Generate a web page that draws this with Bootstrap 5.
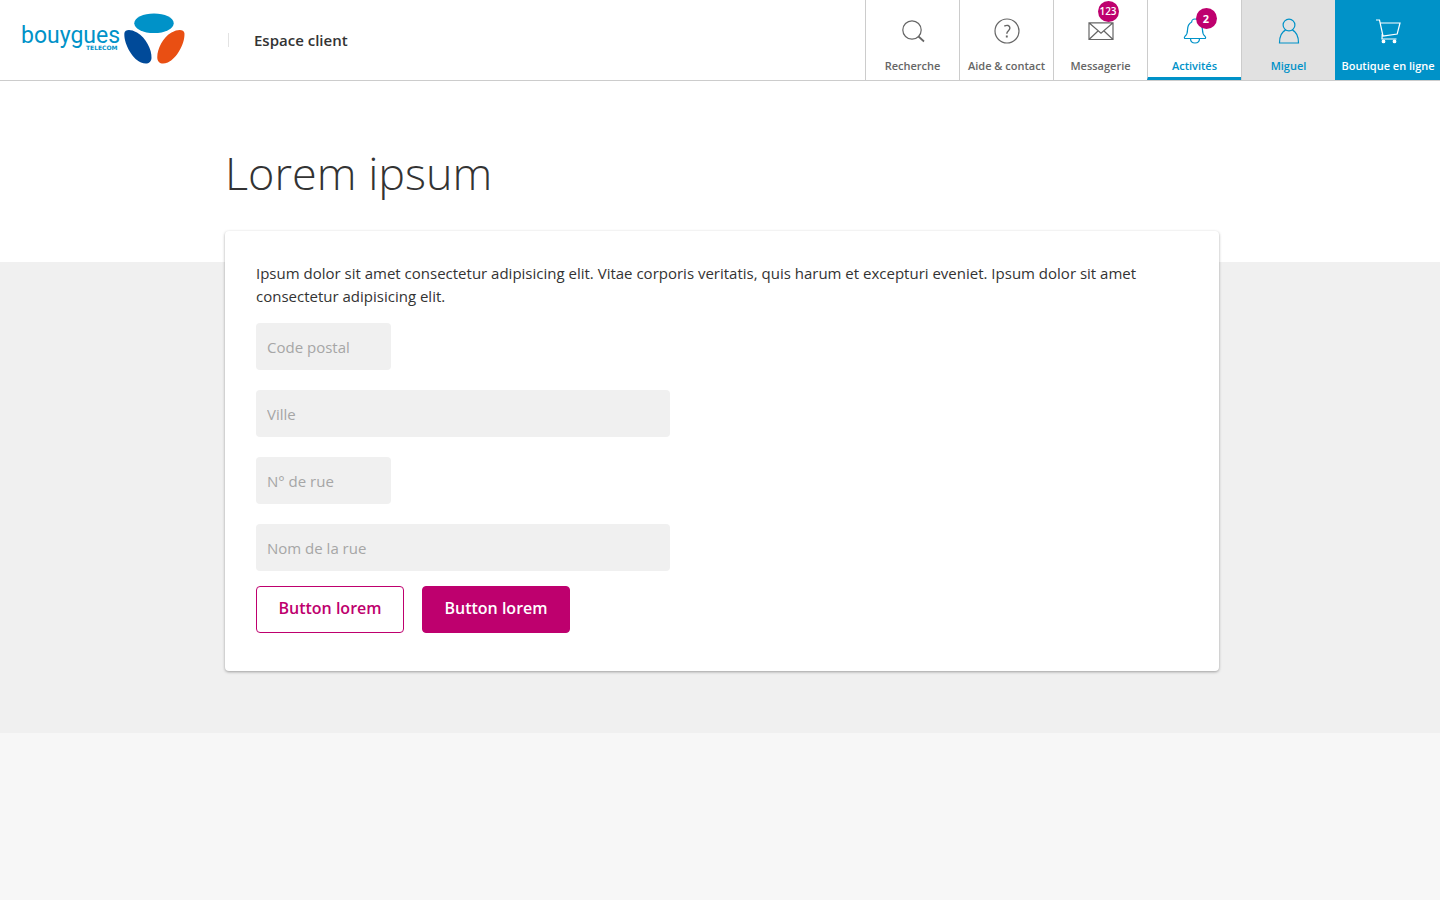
<!DOCTYPE html>
<html lang="fr">
<head>
<meta charset="utf-8">
<meta name="viewport" content="width=device-width, initial-scale=1">
<title>Espace client</title>
<link href="https://cdn.jsdelivr.net/npm/bootstrap@5.3.0/dist/css/bootstrap.min.css" rel="stylesheet">
<style>
  :root { --bt-blue: #0092c8; --bt-pink: #be006e; --bt-ink: #333; }
  body { font-family: "Open Sans", sans-serif; font-size: 15px; line-height: 23px; color: var(--bt-ink); background: #f7f7f7; }
  .site-header { min-height: 81px; border-bottom: 1px solid #ccc; }
  .brand-text { fill: var(--bt-blue); font-family: Roboto, sans-serif; font-size: 23px; }
  .brand-sub { fill: var(--bt-blue); font-family: "DejaVu Sans", sans-serif; font-size: 6px; font-weight: 700; }
  .space-name { margin-left: 43px; }
  .space-name::before { content: ""; width: 1px; height: 14px; margin-right: 25px; background: #e3e3e3; }
  .tool-link { min-width: 94px; padding-top: 17px; border-left: 1px solid #ccc; color: #666; font-size: 11px; line-height: 16px; font-weight: 600; text-decoration: none; white-space: nowrap; }
  .tool-link svg { fill: none; stroke: currentColor; stroke-width: 1.2; margin-bottom: 13px; }
  .tool-active { color: var(--bt-blue); border-bottom: 3px solid var(--bt-blue); }
  .tool-user { color: var(--bt-blue); background: #e1e1e1; }
  .tool-shop { min-width: 105px; color: #fff; background: var(--bt-blue); border-color: var(--bt-blue); }
  .icon-wrap { position: relative; }
  .count { position: absolute; width: 21px; height: 21px; border-radius: 50%; background: var(--bt-pink); color: #fff; font-size: 11px; line-height: 21px; text-align: center; }
  .count-bell { left: 15px; top: -9px; font-weight: 700; }
  .count-mail { left: 11px; top: -16px; font-size: 10px; }
  .page-width { max-width: 998px; padding-left: 4px; }
  .hero { padding-top: 61px; padding-bottom: 59px; }
  .page-title { font-size: 45px; line-height: 61px; font-weight: 300; }
  .form-area { display: flow-root; background: #f0f0f0; padding-bottom: 62px; }
  .panel { margin-top: -31px; padding: 31px 31px 38px; border-radius: 4px; background: #fff; box-shadow: 0 1px 3px rgba(0,0,0,.35); }
  .intro { margin-bottom: 15px; }
  .fields { gap: 20px; }
  .field { height: 47px; padding: 12px 11px; border: 0; border-radius: 4px; background: #f0f0f0; font-size: 15px; line-height: 23px; }
  .field::placeholder { color: #a6a6a6; }
  .field-short { max-width: 135px; }
  .field-long { max-width: 414px; }
  .actions { gap: 18px; margin-top: 15px; }
  .action { height: 47px; min-width: 148px; padding: 0 0 3px; border-radius: 4px; font-size: 16px; font-weight: 600;
    --bs-btn-color: var(--bt-pink); --bs-btn-bg: #fff; --bs-btn-border-color: var(--bt-pink); --bs-btn-hover-bg: #fbeaf4; --bs-btn-hover-color: var(--bt-pink); --bs-btn-hover-border-color: var(--bt-pink); }
  .action-main { --bs-btn-color: #fff; --bs-btn-bg: var(--bt-pink); --bs-btn-hover-bg: #9c005a; --bs-btn-hover-color: #fff; }
</style>
</head>
<body>
<header class="site-header bg-white d-flex flex-wrap justify-content-between">
  <div class="d-flex align-items-center">
    <a href="#" class="ms-3" aria-label="Bouygues Telecom">
      <svg class="d-block" width="169" height="60" viewBox="16 10 169 60">
        <text class="brand-text" x="21" y="43">bouygues</text>
        <text class="brand-sub" x="86" y="50">TELECOM</text>
        <ellipse cx="154" cy="23.3" rx="19.7" ry="9.8" fill="#0092c8"/>
        <path d="M124.4 33C125 29.500 130 28.500 137 32.500C146 37.500 152 50 151.500 58C151.200 63 147 65 141 62.500C131 58 123.500 42 124.400 33Z" fill="#004a99"/>
        <path d="M184.400 33C183.800 29.500 178.500 28.500 171.500 32.500C162.500 37.500 156.800 50 157.300 58C157.600 63 161.800 65 167.800 62.500C177.800 58 185.300 42 184.400 33Z" fill="#e94f13"/>
      </svg>
    </a>
    <a href="#" class="space-name d-flex align-items-center fw-semibold text-reset text-decoration-none">Espace client</a>
  </div>
  <nav class="d-flex" aria-label="Outils">
    <a href="#" class="tool-link d-flex flex-column align-items-center">
      <svg width="28" height="28" viewBox="0 0 28 28"><circle cx="13" cy="13" r="9.200"/><path d="M19.500 19.500L25 24.500" stroke-width="1.700"/></svg>Recherche</a>
    <a href="#" class="tool-link d-flex flex-column align-items-center">
      <svg width="28" height="28" viewBox="0 0 28 28"><circle cx="14" cy="14" r="12"/><path d="M11.300 9.200C14 7.600 16.900 8.300 16.900 11C16.900 13.700 13.800 13.700 13.800 16.800" stroke-width="1.400"/><path d="M13.800 18.500V20.500" stroke-width="1.900"/></svg>Aide &amp; contact</a>
    <a href="#" class="tool-link d-flex flex-column align-items-center">
      <span class="icon-wrap"><svg class="d-block" width="28" height="28" viewBox="0 0 28 28"><path d="M2 5.800H26V22.500H2ZM2 5.800L14 16.200L26 5.800M2 22.500L11 14M26 22.500L17 14"/></svg><span class="count count-mail">123</span></span>Messagerie</a>
    <a href="#" class="tool-link tool-active d-flex flex-column align-items-center" aria-current="page">
      <span class="icon-wrap"><svg class="d-block" width="28" height="28" viewBox="0 0 28 28"><path d="M14 2C16.500 2 17.300 4 17.300 5C21 7 21.500 9.500 21.500 13C21.500 17 22.200 18 24 19.300C25 20.300 24.800 21.500 23.500 21.500H4.500C3.200 21.500 3 20.300 4 19.300C5.800 18 6.500 17 6.500 13C6.500 9.500 7 7 10.700 5C10.700 4 11.500 2 14 2ZM9.500 21.500C9.500 27.500 18.500 27.500 18.500 21.500"/></svg><span class="count count-bell">2</span></span>Activités</a>
    <a href="#" class="tool-link tool-user d-flex flex-column align-items-center">
      <svg width="28" height="28" viewBox="0 0 28 28"><circle cx="14" cy="8" r="5.900"/><path d="M10.700 12.900C6.500 15 4.500 19.500 4.500 26H23.500C23.500 19.500 21.500 15 17.300 12.900"/></svg>Miguel</a>
    <a href="#" class="tool-link tool-shop d-flex flex-column align-items-center">
      <svg width="28" height="28" viewBox="0 0 28 28"><path d="M2 3H5.500L9 19M6.300 6H26L23.200 17L8.700 19.200M8.200 17L8 22H22.500"/><circle cx="9.500" cy="24.400" r="1.300" fill="#fff"/><circle cx="20.500" cy="24.400" r="1.300" fill="#fff"/></svg>Boutique en ligne</a>
  </nav>
</header>
<main>
  <div class="hero bg-white"><div class="page-width mx-auto"><h1 class="page-title mb-0">Lorem ipsum</h1></div></div>
  <div class="form-area">
    <div class="page-width mx-auto">
      <form class="panel position-relative">
        <p class="intro">Ipsum dolor sit amet consectetur adipisicing elit. Vitae corporis veritatis, quis harum et excepturi eveniet. Ipsum dolor sit amet consectetur adipisicing elit.</p>
        <div class="fields d-flex flex-column">
          <input class="form-control field field-short" name="cp" aria-label="Code postal" placeholder="Code postal">
          <input class="form-control field field-long" name="ville" aria-label="Ville" placeholder="Ville">
          <input class="form-control field field-short" name="num" aria-label="N° de rue" placeholder="N° de rue">
          <input class="form-control field field-long" name="rue" aria-label="Nom de la rue" placeholder="Nom de la rue">
        </div>
        <div class="actions d-flex flex-wrap">
          <button type="button" class="btn action">Button lorem</button>
          <button type="submit" class="btn action action-main">Button lorem</button>
        </div>
      </form>
    </div>
  </div>
</main>
<script src="https://cdn.jsdelivr.net/npm/bootstrap@5.3.0/dist/js/bootstrap.bundle.min.js"></script>
</body>
</html>
